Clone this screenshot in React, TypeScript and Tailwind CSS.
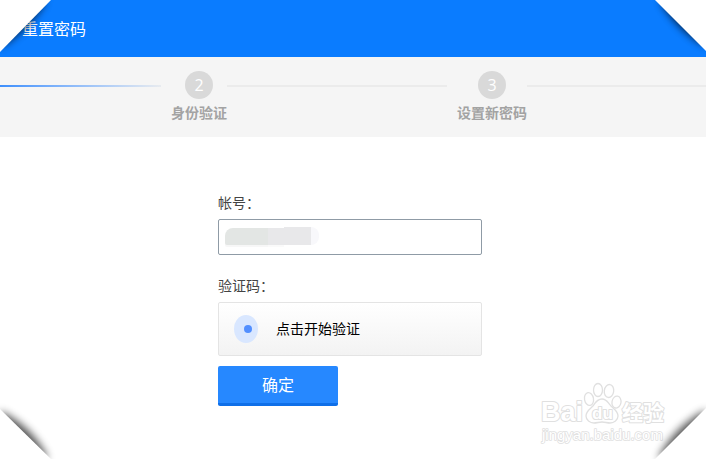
import React, { useState, ChangeEvent, FormEvent } from 'react';
import clsx from 'clsx';

interface StepProps {
  index: number;
  label: string;
}

function Step({ index, label }: StepProps) {
  return (
    <li className="flex flex-none flex-col items-center pl-2.5">
      <span className="flex h-7 w-7 items-center justify-center rounded-full bg-[#d9d9d9] text-base text-white">
        {index}
      </span>
      <span className="mt-1 text-sm font-bold text-[#a3a3a3]">{label}</span>
    </li>
  );
}

function StepLine({ className }: { className: string }) {
  return <li aria-hidden="true" className={clsx('mt-3.5 h-0.5', className)} />;
}

interface CornerProps {
  id: string;
  className: string;
  points: string;
  shadow: string;
  opacity: number;
}

// Folded page corner with a soft shadow along the fold
function Corner({ id, className, points, shadow, opacity }: CornerProps) {
  return (
    <svg
      viewBox="0 0 80 80"
      aria-hidden="true"
      className={clsx('pointer-events-none absolute h-20 w-20', className)}
    >
      <defs>
        <filter id={id} x="-50%" y="-50%" width="200%" height="200%">
          <feGaussianBlur stdDeviation="4" />
        </filter>
      </defs>
      <path d={shadow} fill="#000" opacity={opacity} filter={`url(#${id})`} />
      <polygon points={points} fill="#fff" />
    </svg>
  );
}

function Watermark() {
  return (
    <div className="pointer-events-none absolute right-10 bottom-3 select-none" aria-hidden="true">
      <svg viewBox="0 0 126 64" className="h-16 w-[126px] overflow-visible">
        <g fill="#fff" stroke="#e0e0e0" strokeWidth="1.3">
          <ellipse cx="49" cy="16" rx="4.5" ry="6.5" transform="rotate(-10 49 16)" />
          <ellipse cx="58" cy="7" rx="4.5" ry="6.5" />
          <ellipse cx="69" cy="8" rx="4.7" ry="6.5" transform="rotate(8 69 8)" />
          <ellipse cx="76.5" cy="19" rx="4.5" ry="6" transform="rotate(10 76 19)" />
          <path d="M62 16c-5 0-7 4-9 7-3 3-7 5-7 10 0 4 4 7 8 7 3 0 5-1 8-1s5 1 8 1c4 0 8-3 8-7 0-5-4-7-7-10-3-3-4-7-9-7z" />
        </g>
        <g fill="#fff" stroke="#e0e0e0" strokeLinejoin="round" paintOrder="stroke">
          <g fontFamily="'Liberation Sans', sans-serif">
            <text x="1" y="38" fontSize="27" fontWeight="bold" strokeWidth="2">Bai</text>
            <text x="52" y="36" fontSize="17" fontWeight="bold" strokeWidth="2">du</text>
            <text x="2" y="57" fontSize="15" strokeWidth="1.6">jingyan.baidu.com</text>
          </g>
          <text
            x="82"
            y="37"
            fontSize="21"
            fontWeight="bold"
            strokeWidth="2"
            fontFamily="'Noto Sans CJK SC', sans-serif"
          >
            经验
          </text>
        </g>
      </svg>
    </div>
  );
}

export default function App() {
  const [account, setAccount] = useState('');

  const handleSubmit = (e: FormEvent) => {
    e.preventDefault();
  };

  return (
    <div className="relative min-h-screen overflow-hidden bg-white font-['Open_Sans','Noto_Sans_CJK_SC',sans-serif]">
      <header className="flex h-[57px] items-center bg-[#0a7cff] px-[22px]">
        <h1 className="text-base text-white">重置密码</h1>
      </header>

      <ol className="flex h-20 items-start bg-[#f5f5f5] pt-3.5">
        <StepLine className="flex-[161] bg-linear-to-r from-[#3d8ffc] to-[#e8ebef]" />
        <Step index={2} label="身份验证" />
        <StepLine className="flex-[220] bg-[#ebebeb]" />
        <Step index={3} label="设置新密码" />
        <StepLine className="flex-[179] bg-[#ebebeb]" />
      </ol>

      <main className="pt-14 pr-1.5">
        <form onSubmit={handleSubmit} className="mx-auto w-[264px] text-sm">
          <label htmlFor="account" className="block leading-5 text-[#444]">
            帐号：
          </label>
          <div className="relative mt-1.5">
            <input
              id="account"
              type="text"
              value={account}
              onChange={(e: ChangeEvent<HTMLInputElement>) => setAccount(e.target.value)}
              className="block h-9 w-full rounded-xs border border-[#8f9ba6] px-2 outline-none"
            />
            {/* masked account value */}
            <div className="pointer-events-none absolute top-2 left-[7px] flex h-[18px]">
              <span className="mt-px w-[43px] rounded-tl-lg rounded-bl-xs bg-[#e3e6e4] shadow-[0_2px_0_#f7f7f7]" />
              <span className="mt-px w-4 bg-[#e8e8ea] shadow-[0_2px_0_#fafafa]" />
              <span className="w-[27px] bg-[#e8e8ea]" />
              <span className="w-2 rounded-r-lg bg-[#f8f8fb]" />
            </div>
          </div>

          <label htmlFor="captcha" className="mt-[21px] block leading-5 text-[#444]">
            验证码：
          </label>
          <button
            id="captcha"
            type="button"
            className="mt-1.5 flex h-[54px] w-full items-center rounded-xs border border-[#e4e4e4] bg-linear-to-b from-white to-[#f3f3f3] px-[15px] text-black"
          >
            <span className="flex h-7 w-6 items-center justify-center rounded-[50%] bg-[#d9e7ff] pl-1">
              <span className="h-2 w-2 rounded-full bg-[#528fff]" />
            </span>
            <span className="ml-[18px]">点击开始验证</span>
          </button>

          <button
            type="submit"
            className="mt-2.5 block h-10 w-[120px] rounded-xs border-b-3 border-[#0f6fe8] bg-[#2688ff] text-base text-white"
          >
            确定
          </button>
        </form>
      </main>

      <Watermark />

      <Corner
        id="fold-tl"
        className="top-0 left-0"
        points="0,0 51,0 0,52"
        shadow="M46 0 Q29 29 0 47 L0 36 L36 0 Z"
        opacity={0.8}
      />
      <Corner
        id="fold-tr"
        className="top-0 right-0"
        points="29,0 80,0 80,51"
        shadow="M34 0 Q51 29 80 46 L80 36 L44 0 Z"
        opacity={0.8}
      />
      <Corner
        id="fold-bl"
        className="bottom-0 left-0"
        points="0,30 51,80 0,80"
        shadow="M0 32 Q33 48 48 80 L36 80 L0 44 Z"
        opacity={0.7}
      />
      <Corner
        id="fold-br"
        className="right-0 bottom-0"
        points="80,29 80,80 29,80"
        shadow="M80 31 Q48 48 32 80 L44 80 L80 43 Z"
        opacity={0.7}
      />
    </div>
  );
}
